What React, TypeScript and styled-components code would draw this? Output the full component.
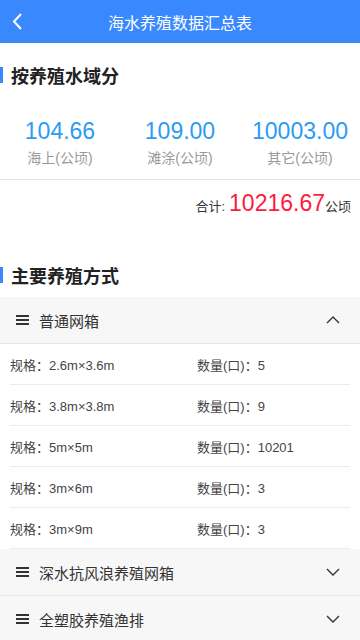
import styled, { createGlobalStyle } from "styled-components";

const GlobalStyle = createGlobalStyle`
    body {
        margin: 0;
        background: #fff;
        font-family: "Liberation Sans", "Noto Sans CJK SC", sans-serif;
        color: #333;
    }
`;

const Page = styled.div`
    width: 360px;
    min-height: 640px;
    overflow: hidden;
`;

const NavBar = styled.header`
    height: 43px;
    background: #3a88fd;
    display: flex;
    align-items: center;
    justify-content: center;
    position: relative;
`;

const NavTitle = styled.h1`
    margin: 0;
    font-size: 16px;
    font-weight: normal;
    color: #fff;
    font-family: "Noto Sans CJK SC", sans-serif;
`;

const BackBtn = styled.span`
    position: absolute;
    left: 12px;
    top: 12px;
    display: flex;
`;

const SectionTitle = styled.h2<{ $top: number }>`
    margin: ${(p) => p.$top}px 0 11px;
    height: 22px;
    line-height: 22px;
    font-size: 18px;
    font-weight: bold;
    color: #222;
    padding-left: 11px;
    position: relative;
    font-family: "Noto Sans CJK SC", sans-serif;
    &::before {
        content: "";
        position: absolute;
        left: 0;
        top: 3px;
        width: 3px;
        height: 16px;
        background: #3a88fd;
    }
`;

const Stats = styled.div`
    display: grid;
    grid-template-columns: repeat(3, 1fr);
    padding: 20px 0 11px;
    border-bottom: 1px solid #e5e5e5;
`;

const Stat = styled.div`
    display: flex;
    flex-direction: column;
    align-items: center;
`;

const StatValue = styled.span`
    font-size: 23px;
    line-height: 28px;
    color: #2a9cf4;
`;

const StatLabel = styled.span`
    margin-top: 3px;
    font-size: 14px;
    line-height: 20px;
    color: #999;
`;

const Total = styled.div`
    display: flex;
    justify-content: flex-end;
    align-items: baseline;
    padding: 10px 9px 0 0;
    height: 34px;
`;

const TotalLabel = styled.span`
    font-size: 13px;
    color: #333;
`;

const TotalValue = styled.span`
    font-size: 23px;
    color: #ff1a3d;
    margin-left: 4px;
`;

const TotalUnit = styled.span`
    font-size: 13px;
    color: #333;
`;

const PanelHead = styled.div`
    height: 46px;
    background: #f7f7f7;
    border-bottom: 1px solid #e6e6e6;
    display: flex;
    align-items: center;
    padding: 0 20px 0 16px;
    gap: 10px;
`;

const PanelName = styled.span`
    flex: 1;
    font-size: 15px;
    color: #333;
    font-family: "Noto Sans CJK SC", sans-serif;
`;

const Rows = styled.div`
    padding: 0 10px;
`;

const Row = styled.div`
    height: 40px;
    border-bottom: 1px solid #ececec;
    display: grid;
    grid-template-columns: 187px 1fr;
    align-items: center;
    font-size: 13px;
    color: #444;
`;

const Menu = () => (
    <svg width="13" height="12" viewBox="0 0 13 12">
        <rect x="0" y="1" width="13" height="2" fill="#333" />
        <rect x="0" y="5" width="13" height="2" fill="#333" />
        <rect x="0" y="9" width="13" height="2" fill="#333" />
    </svg>
);

const Chevron = ({ up }: { up?: boolean }) => (
    <svg width="14" height="10" viewBox="0 0 14 10">
        <path d={up ? "M1 8 L7 2 L13 8" : "M1 2 L7 8 L13 2"} fill="none" stroke="#333" strokeWidth="1.4" />
    </svg>
);

const stats = [
    { value: "104.66", label: "海上(公顷)" },
    { value: "109.00", label: "滩涂(公顷)" },
    { value: "10003.00", label: "其它(公顷)" },
];

const cages = [
    { size: "2.6m×3.6m", count: "5" },
    { size: "3.8m×3.8m", count: "9" },
    { size: "5m×5m", count: "10201" },
    { size: "3m×6m", count: "3" },
    { size: "3m×9m", count: "3" },
];

function App() {
    return (
        <Page>
            <GlobalStyle />
            <NavBar>
                <BackBtn>
                    <svg width="12" height="19" viewBox="0 0 12 19">
                        <path d="M9 2 L2 9.5 L9 17" fill="none" stroke="#fff" strokeWidth="2" />
                    </svg>
                </BackBtn>
                <NavTitle>海水养殖数据汇总表</NavTitle>
            </NavBar>

            <SectionTitle $top={21}>按养殖水域分</SectionTitle>
            <Stats>
                {stats.map((s) => (
                    <Stat key={s.label}>
                        <StatValue>{s.value}</StatValue>
                        <StatLabel>{s.label}</StatLabel>
                    </Stat>
                ))}
            </Stats>
            <Total>
                <TotalLabel>合计:</TotalLabel>
                <TotalValue>10216.67</TotalValue>
                <TotalUnit>公顷</TotalUnit>
            </Total>

            <SectionTitle $top={40}>主要养殖方式</SectionTitle>
            <PanelHead>
                <Menu />
                <PanelName>普通网箱</PanelName>
                <Chevron up />
            </PanelHead>
            <Rows>
                {cages.map((c) => (
                    <Row key={c.size}>
                        <span>规格：{c.size}</span>
                        <span>数量(口)：{c.count}</span>
                    </Row>
                ))}
            </Rows>
            <PanelHead>
                <Menu />
                <PanelName>深水抗风浪养殖网箱</PanelName>
                <Chevron />
            </PanelHead>
            <PanelHead>
                <Menu />
                <PanelName>全塑胶养殖渔排</PanelName>
                <Chevron />
            </PanelHead>
        </Page>
    );
}

export default App;
